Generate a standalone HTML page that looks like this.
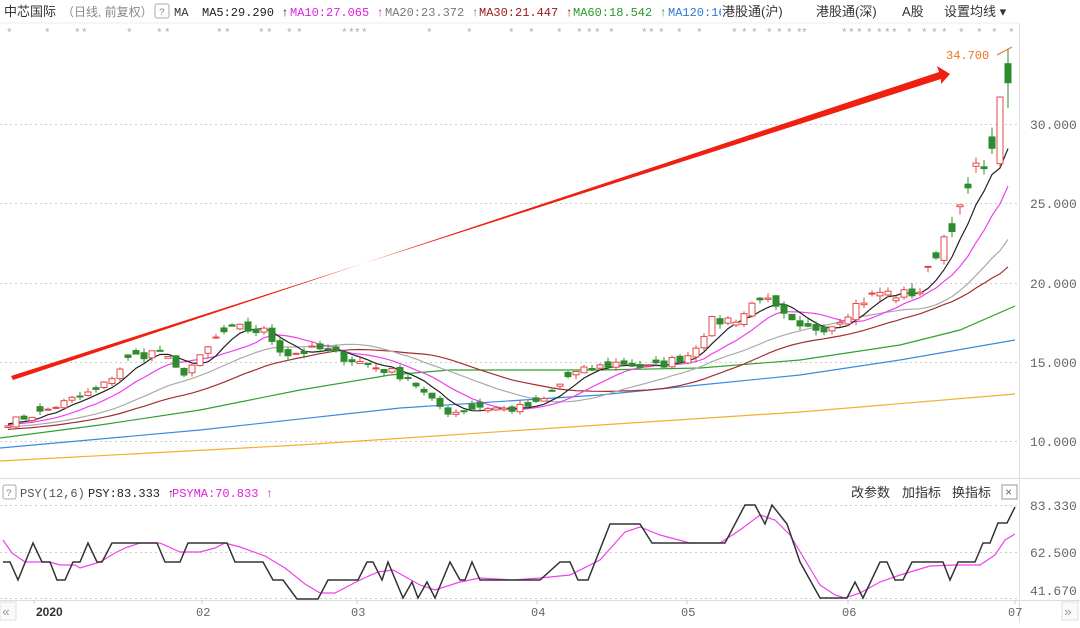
<!DOCTYPE html>
<html><head><meta charset="utf-8"><style>
body{margin:0;width:1080px;height:623px;overflow:hidden;background:#fff;font-family:"Liberation Sans","Noto Sans CJK SC",sans-serif;}
svg text{font-family:"Liberation Mono","Noto Sans CJK SC",monospace;}
.cn{font-family:"Liberation Sans","Noto Sans CJK SC",sans-serif;}
</style></head><body>
<svg id="s" width="1080" height="623" xmlns="http://www.w3.org/2000/svg">
<rect width="1080" height="623" fill="#fff"/>
<text x="4" y="16" font-size="13" fill="#333" class="cn">中芯国际</text>
<text x="62" y="16" font-size="12" fill="#888" class="cn">（日线, 前复权）</text>
<rect x="155" y="4" width="14" height="14" fill="none" stroke="#aaa" rx="2"/>
<text x="159" y="15" font-size="10" fill="#888">?</text>
<text x="174" y="16" font-size="12" fill="#333">MA</text>
<text x="202" y="16" font-size="12" fill="#222">MA5:29.290 ↑</text>
<text x="290" y="16" font-size="12" fill="#e020e0">MA10:27.065 ↑</text>
<text x="385" y="16" font-size="12" fill="#777">MA20:23.372 ↑</text>
<text x="479" y="16" font-size="12" fill="#a01818">MA30:21.447 ↑</text>
<text x="573" y="16" font-size="12" fill="#2a9a2a">MA60:18.542 ↑</text>
<text x="668" y="16" font-size="12" fill="#2a7ad8">MA120:16.</text>
<rect x="721" y="2" width="300" height="20" fill="#fff"/>
<text x="722" y="16" font-size="13" fill="#333" class="cn">港股通(沪)</text>
<text x="816" y="16" font-size="13" fill="#333" class="cn">港股通(深)</text>
<text x="902" y="16" font-size="13" fill="#333" class="cn">A股</text>
<text x="944" y="16" font-size="13" fill="#333" class="cn">设置均线 ▾</text>
<line x1="0" y1="23" x2="1019" y2="23" stroke="#eee"/>
<line x1="1019.5" y1="23" x2="1019.5" y2="623" stroke="#ddd"/>
<line x1="0" y1="478.5" x2="1080" y2="478.5" stroke="#ddd"/>
<line x1="0" y1="600.5" x2="1080" y2="600.5" stroke="#ddd"/>
<g id="stars" fill="#aaa" font-size="11"></g>
<g id="grid" stroke="#ccc" stroke-dasharray="2,3"></g>
<g fill="#666" font-size="13">
<text x="1030" y="129">30.000</text><text x="1030" y="208">25.000</text><text x="1030" y="288">20.000</text><text x="1030" y="367">15.000</text><text x="1030" y="446">10.000</text>
<text x="1030" y="510">83.330</text><text x="1030" y="557">62.500</text><text x="1030" y="595">41.670</text>
</g>
<g id="ma"></g>
<g id="c"></g>
<polygon points="13,380 939,72 937,66 950,74 941,84 941,79 11,376" fill="#f02010"/>
<text x="946" y="59" font-size="12" fill="#f07020">34.700</text>
<line x1="997" y1="55" x2="1012" y2="47" stroke="#f07020"/>
<rect x="3" y="485" width="13" height="14" fill="none" stroke="#aaa" rx="2"/>
<text x="6" y="496" font-size="10" fill="#888">?</text>
<text x="20" y="497" font-size="12" fill="#555">PSY(12,6)</text>
<text x="88" y="497" font-size="12" fill="#222">PSY:83.333 ↑</text>
<text x="172" y="497" font-size="12" fill="#e020e0">PSYMA:70.833 ↑</text>
<text x="851" y="497" font-size="13" fill="#333" class="cn">改参数</text>
<text x="902" y="497" font-size="13" fill="#333" class="cn">加指标</text>
<text x="952" y="497" font-size="13" fill="#333" class="cn">换指标</text>
<rect x="1002" y="485" width="15" height="14" fill="none" stroke="#999"/>
<text x="1005" y="496" font-size="12" fill="#666">×</text>
<line x1="0" y1="505.5" x2="1019" y2="505.5" stroke="#ccc" stroke-dasharray="2,3"/>
<line x1="0" y1="552.5" x2="1019" y2="552.5" stroke="#ccc" stroke-dasharray="2,3"/>
<line x1="0" y1="598.5" x2="1019" y2="598.5" stroke="#ccc" stroke-dasharray="2,3"/>
<polyline fill="none" stroke="#f040f0" stroke-width="1.2" points="3,540 12,553 25,562 50,562 60,565 75,565 80,568 90,565 100,562 115,553 125,548 140,543 160,543 180,552 200,552 215,548 225,543 240,547 265,556 285,568 305,584 320,593 335,593 360,580 378,572 393,570 420,585 435,590 460,582 480,578 513,580 540,578 570,575 600,560 625,532 640,527 660,535 690,543 720,543 740,530 760,515 775,520 790,535 805,560 820,585 835,595 845,598 860,593 880,582 900,575 930,566 955,565 980,565 995,555 1005,540 1015,534"/>
<polyline fill="none" stroke="#333" stroke-width="1.5" points="3,562 10,562 18,580 33,543 42,562 50,562 57,580 65,580 73,562 80,562 88,543 97,562 102,562 112,543 157,543 165,562 180,562 188,543 227,543 235,562 263,562 273,580 283,580 297,599 318,599 328,580 358,580 367,562 373,562 382,580 388,562 403,598 412,582 418,598 427,582 435,598 450,562 460,580 465,580 472,562 480,580 540,580 560,562 570,562 578,580 588,580 610,524 640,524 652,543 725,543 745,505 755,505 765,524 772,505 787,524 800,562 810,580 820,598 847,598 855,582 863,598 880,562 887,562 895,580 903,580 912,562 943,562 950,580 958,562 975,562 983,543 990,543 998,523 1007,523 1015,507"/>
<rect x="0" y="602" width="16" height="18" fill="#fafafa" stroke="#ddd"/>
<text x="2" y="616" font-size="13" fill="#999">«</text>
<rect x="1062" y="602" width="16" height="18" fill="#fafafa" stroke="#ddd"/>
<text x="1064" y="616" font-size="13" fill="#999">»</text>
<g font-size="12" fill="#666">
<text x="36" y="616" fill="#333" font-weight="bold" style="font-family:'Liberation Sans'">2020</text>
<text x="196" y="616">02</text><text x="351" y="616">03</text><text x="531" y="616">04</text><text x="681" y="616">05</text><text x="842" y="616">06</text><text x="1008" y="616">07</text>
</g>
<g stroke="#ccc"><line x1="34" y1="600" x2="34" y2="604"/><line x1="202" y1="600" x2="202" y2="604"/><line x1="357" y1="600" x2="357" y2="604"/><line x1="537" y1="600" x2="537" y2="604"/><line x1="687" y1="600" x2="687" y2="604"/><line x1="848" y1="600" x2="848" y2="604"/><line x1="1015" y1="600" x2="1015" y2="604"/></g>
</svg>
<script>
var NS="http://www.w3.org/2000/svg";
function el(p,t,a){var e=document.createElementNS(NS,t);for(var k in a)e.setAttribute(k,a[k]);p.appendChild(e);return e;}
var g=document.getElementById('grid');
[124,203,283,362,441].forEach(function(y){el(g,'line',{x1:0,y1:y+.5,x2:1019,y2:y+.5});});
var st=document.getElementById('stars');
var sx=[10,48,78,85,130,160,168,220,228,262,270,290,300,345,352,358,365,430,470,512,532,560,580,590,598,612,645,652,662,680,700,735,745,755,770,780,790,800,805,845,852,860,870,880,888,895,910,925,935,945,962,980,995,1012];
sx.forEach(function(x){var t=el(st,'text',{x:x-4,y:36});t.textContent='*';});
var K=[[8,11.2],[40,11.8],[70,12.6],[100,13.3],[130,15.3],[160,15.7],[180,14.2],[200,15.2],[220,16.8],[240,17.1],[265,16.9],[285,15.5],[320,15.8],[350,15.2],[380,14.6],[410,14.0],[430,12.6],[450,11.8],[480,12.2],[510,12.0],[540,12.4],[570,14.2],[600,14.7],[620,15.0],[650,14.6],[690,15.5],[710,17.5],[740,17.8],[760,19.2],[780,18.0],[800,17.0],[830,17.3],[860,18.8],[880,19.4],[900,19.2],[920,19.5],[940,22.5],[960,24.5],[975,27],[990,28.2],[1000,27.3],[1008,31.5],[1015,33.2]];
function interp(x){for(var i=0;i<K.length-1;i++){if(x<=K[i+1][0]){var t=(x-K[i][0])/(K[i+1][0]-K[i][0]);return K[i][1]+t*(K[i+1][1]-K[i][1]);}}return K[K.length-1][1];}
var seed=7;function rnd(){seed=(seed*16807)%2147483647;return seed/2147483647;}
var xs=[],cl=[];for(var x=8;x<=1015;x+=8){xs.push(x);cl.push(interp(x)*(1+(rnd()-.5)*0.04));}
function Y(p){return 124+(30-p)*15.87;}
var hist=[];for(var i=0;i<40;i++)hist.push(10.0+i*0.03);
var all=hist.concat(cl);
function ma(n){var r=[];for(var i=0;i<cl.length;i++){var j=i+hist.length,s=0;for(var k=0;k<n;k++)s+=all[j-k];r.push(s/n);}return r;}
var M=document.getElementById('ma');
function pl(pts,c){el(M,'polyline',{points:pts,fill:'none',stroke:c,'stroke-width':1.2});}
pl("0,461 300,445 600,425 800,412 1015,394","#f0b030");
pl("0,448 200,430 400,408 600,395 800,375 900,360 1015,340","#3a8ae0");
pl("0,438 100,425 200,410 300,390 390,375 450,370 600,370 700,368 800,360 900,345 960,330 1015,306","#30a030");
[[30,"#a03030"],[20,"#aaa"],[10,"#f040f0"],[5,"#222"]].forEach(function(m){var a=ma(m[0]);pl(a.map(function(v,i){return xs[i]+','+Y(v).toFixed(1);}).join(' '),m[1]);});
var C=document.getElementById('c');
var prev=cl[0]*0.99,n=cl.length;
for(var i=0;i<n;i++){var c=cl[i],o=prev*(1+(rnd()-.5)*0.02);if(rnd()<0.3){o=c*(1+(rnd()-.3)*0.04);}
var hi=Math.max(o,c)*(1+rnd()*0.02),lo=Math.min(o,c)*(1-rnd()*0.02);
if(i==n-1){o=33.8;c=32.6;hi=34.7;lo=31.0;}
if(i==n-2){o=27.5;c=31.7;hi=31.7;lo=27.3;}
var up=c>=o,col=up?'#e04848':'#2e8b2e',x=xs[i];
el(C,'line',{x1:x,y1:Y(hi),x2:x,y2:Y(lo),stroke:col});
var t=Y(Math.max(o,c)),b=Y(Math.min(o,c));if(b-t<1)b=t+1;
el(C,'rect',{x:x-3,y:t,width:6,height:b-t,fill:up?'#fff':col,stroke:col});prev=c;}
</script>
</body></html>
